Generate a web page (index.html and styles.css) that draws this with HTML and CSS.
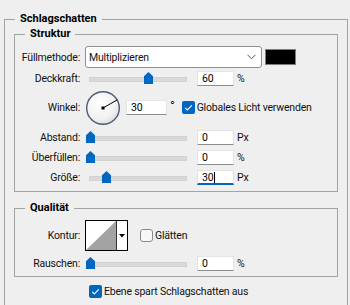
FILE: index.html
```html
<!DOCTYPE html>
<html lang="de">
<head>
    <meta charset="UTF-8">
    <meta name="viewport" content="width=device-width, initial-scale=1.0">
    <title>Schlagschatten</title>
    <link rel="stylesheet" href="styles.css">
</head>
<body>
    <fieldset class="group dialog">
        <legend>Schlagschatten</legend>

        <fieldset class="group section section-structure">
            <legend>Struktur</legend>

            <div class="row row-blend">
                <span class="row-label">Füllmethode:</span>
                <div class="select">
                    <span>Multiplizieren</span>
                    <svg class="chevron" width="9" height="6" viewBox="0 0 9 6"><polyline points="0.5,0.8 4.5,4.8 8.5,0.8" fill="none" stroke="#555" stroke-width="1"/></svg>
                </div>
                <div class="swatch"></div>
            </div>

            <div class="row row-first">
                <span class="row-label">Deckkraft:</span>
                <div class="slider"><span class="thumb" style="left: 59px"></span></div>
                <span class="field">60</span>
                <span class="unit">%</span>
            </div>

            <div class="row row-angle">
                <span class="row-label">Winkel:</span>
                <svg class="dial" width="35" height="35" viewBox="0 0 35 35">
                    <defs>
                        <radialGradient id="dialFill" cx="0.4" cy="0.35" r="0.7">
                            <stop offset="0" stop-color="#ffffff"/>
                            <stop offset="0.7" stop-color="#f1f1f1"/>
                            <stop offset="1" stop-color="#dcdcdc"/>
                        </radialGradient>
                    </defs>
                    <circle cx="18" cy="18" r="16.3" fill="url(#dialFill)" stroke="#4c5a7c" stroke-width="1.4"/>
                    <line x1="18" y1="18" x2="32" y2="10" stroke="#000" stroke-width="1"/>
                    <rect x="16.5" y="16.5" width="3" height="3" fill="#000"/>
                </svg>
                <span class="field field-wide">30</span>
                <span class="deg">°</span>
                <span class="check">
                    <span class="box box-on"><svg width="13" height="13" viewBox="0 0 13 13"><polyline points="3.2,6.8 5.4,9 9.8,4.3" fill="none" stroke="#fff" stroke-width="1.1"/></svg></span>
                    Globales Licht verwenden
                </span>
            </div>

            <div class="row">
                <span class="row-label">Abstand:</span>
                <div class="slider"><span class="thumb" style="left: 1px"></span></div>
                <span class="field">0</span>
                <span class="unit">Px</span>
            </div>

            <div class="row">
                <span class="row-label">Überfüllen:</span>
                <div class="slider"><span class="thumb" style="left: 1px"></span></div>
                <span class="field">0</span>
                <span class="unit">%</span>
            </div>

            <div class="row">
                <span class="row-label">Größe:</span>
                <div class="slider"><span class="thumb" style="left: 17px"></span></div>
                <span class="field field-active">30<i class="caret"></i></span>
                <span class="unit">Px</span>
            </div>
        </fieldset>

        <fieldset class="group section section-quality">
            <legend>Qualität</legend>

            <div class="row row-contour">
                <span class="row-label">Kontur:</span>
                <div class="contour">
                    <svg class="contour-preview" width="30" height="29" viewBox="0 0 30 29"><polygon points="0,29 30,0 30,29" fill="#a3a3a3"/></svg>
                    <span class="contour-arrow"><svg width="6" height="4" viewBox="0 0 6 4"><polygon points="0,0 6,0 3,3.5" fill="#000"/></svg></span>
                </div>
                <span class="check check-smooth">
                    <span class="box box-off"></span>
                    Glätten
                </span>
            </div>

            <div class="row row-first">
                <span class="row-label">Rauschen:</span>
                <div class="slider"><span class="thumb" style="left: 1px"></span></div>
                <span class="field">0</span>
                <span class="unit">%</span>
            </div>
        </fieldset>

        <div class="knockout">
            <span class="box box-on"><svg width="13" height="13" viewBox="0 0 13 13"><polyline points="3.2,6.8 5.4,9 9.8,4.3" fill="none" stroke="#fff" stroke-width="1.1"/></svg></span>
            Ebene spart Schlagschatten aus
        </div>
    </fieldset>
</body>
</html>
```

FILE: styles.css
```css
* {
    box-sizing: border-box;
}
body {
    margin: 0;
    width: 350px;
    height: 305px;
    overflow: hidden;
    background: #efefef;
    font-family: Roboto, "Noto Sans", sans-serif;
    font-size: 10.5px;
    letter-spacing: -0.2px;
    color: #111;
}
.group {
    margin: 0;
    padding: 0;
    min-width: 0;
    border: 1px solid #a3a3a3;
}
.group legend {
    padding: 0 5px;
    line-height: 14px;
    font-size: 11px;
    font-weight: bold;
    letter-spacing: 0;
    color: #000;
}
.dialog {
    margin: 12px 0 0 4px;
    width: 344px;
    padding: 0 9px 6px;
}
.dialog > legend {
    margin-left: 1px;
}
.section > legend {
    margin-left: 10px;
}
.section-structure {
    margin-top: 1px;
    padding-bottom: 6px;
}
.section-quality {
    margin-top: 9px;
    padding-bottom: 5px;
}
.row {
    display: flex;
    align-items: center;
    height: 16px;
    margin-top: 4px;
}
.row-first {
    margin-top: 2px;
}
.section-quality .row-first {
    margin-top: 4px;
}
.row-label {
    flex: none;
    width: 65px;
    margin-right: 5px;
    text-align: right;
}
.row-blend {
    height: 22px;
    margin-top: 5px;
}
.select {
    display: flex;
    align-items: center;
    justify-content: space-between;
    width: 177px;
    height: 22px;
    padding: 0 5px 0 3px;
    background: #fff;
    border: 1px solid #8f8f8f;
    border-radius: 3px;
}
.swatch {
    width: 31px;
    height: 16px;
    margin-left: 3px;
    background: #000;
    border: 1px solid #7d7d7d;
}
.slider {
    position: relative;
    flex: none;
    width: 106px;
    height: 16px;
}
.slider::before {
    content: "";
    position: absolute;
    left: 4px;
    right: 4px;
    top: 7px;
    height: 3px;
    background: #d9d9d9;
    border: 1px solid #d2d2d2;
}
.thumb {
    position: absolute;
    top: 2px;
    width: 9px;
    height: 12px;
    background: #0067c0;
    border-radius: 4px 4px 0 0;
    clip-path: polygon(0 35%, 50% 0, 100% 35%, 100% 100%, 0 100%);
}
.field {
    flex: none;
    width: 37px;
    height: 15px;
    margin-left: 6px;
    padding-left: 4px;
    line-height: 13px;
    background: #fff;
    border: 1px solid #e4e4e4;
    border-bottom-color: #8d8d8d;
    color: #000;
}
.field-wide {
    width: 41px;
}
.field-active {
    border-bottom: 2px solid #0067c0;
}
.caret {
    display: inline-block;
    width: 1px;
    height: 11px;
    margin-left: 1px;
    vertical-align: -2px;
    background: #000;
}
.unit {
    margin-left: 3px;
}
.row-angle {
    height: 35px;
}
.dial {
    flex: none;
}
.deg {
    margin-left: 3px;
    align-self: flex-start;
    margin-top: 10px;
    font-size: 13px;
    line-height: 11px;
}
.check {
    display: flex;
    align-items: center;
    margin-left: 7px;
}
.box {
    flex: none;
    width: 13px;
    height: 13px;
    margin-right: 2px;
    border-radius: 2px;
}
.box svg {
    display: block;
}
.box-on {
    background: #0067c0;
}
.box-off {
    background: #f7f7f7;
    border: 1px solid #8a8a8a;
    border-radius: 3px;
}
.row-contour {
    height: 31px;
    margin-top: 5px;
}
.contour {
    display: flex;
    width: 43px;
    height: 31px;
    background: #fff;
    border: 1px solid #000;
}
.contour-preview {
    display: block;
}
.contour-arrow {
    display: flex;
    justify-content: center;
    align-items: center;
    flex: 1;
    border-left: 1px solid #333;
}
.check-smooth {
    margin-left: 12px;
}
.knockout {
    display: flex;
    align-items: center;
    height: 16px;
    margin-top: 6px;
    padding-left: 75px;
}
```
